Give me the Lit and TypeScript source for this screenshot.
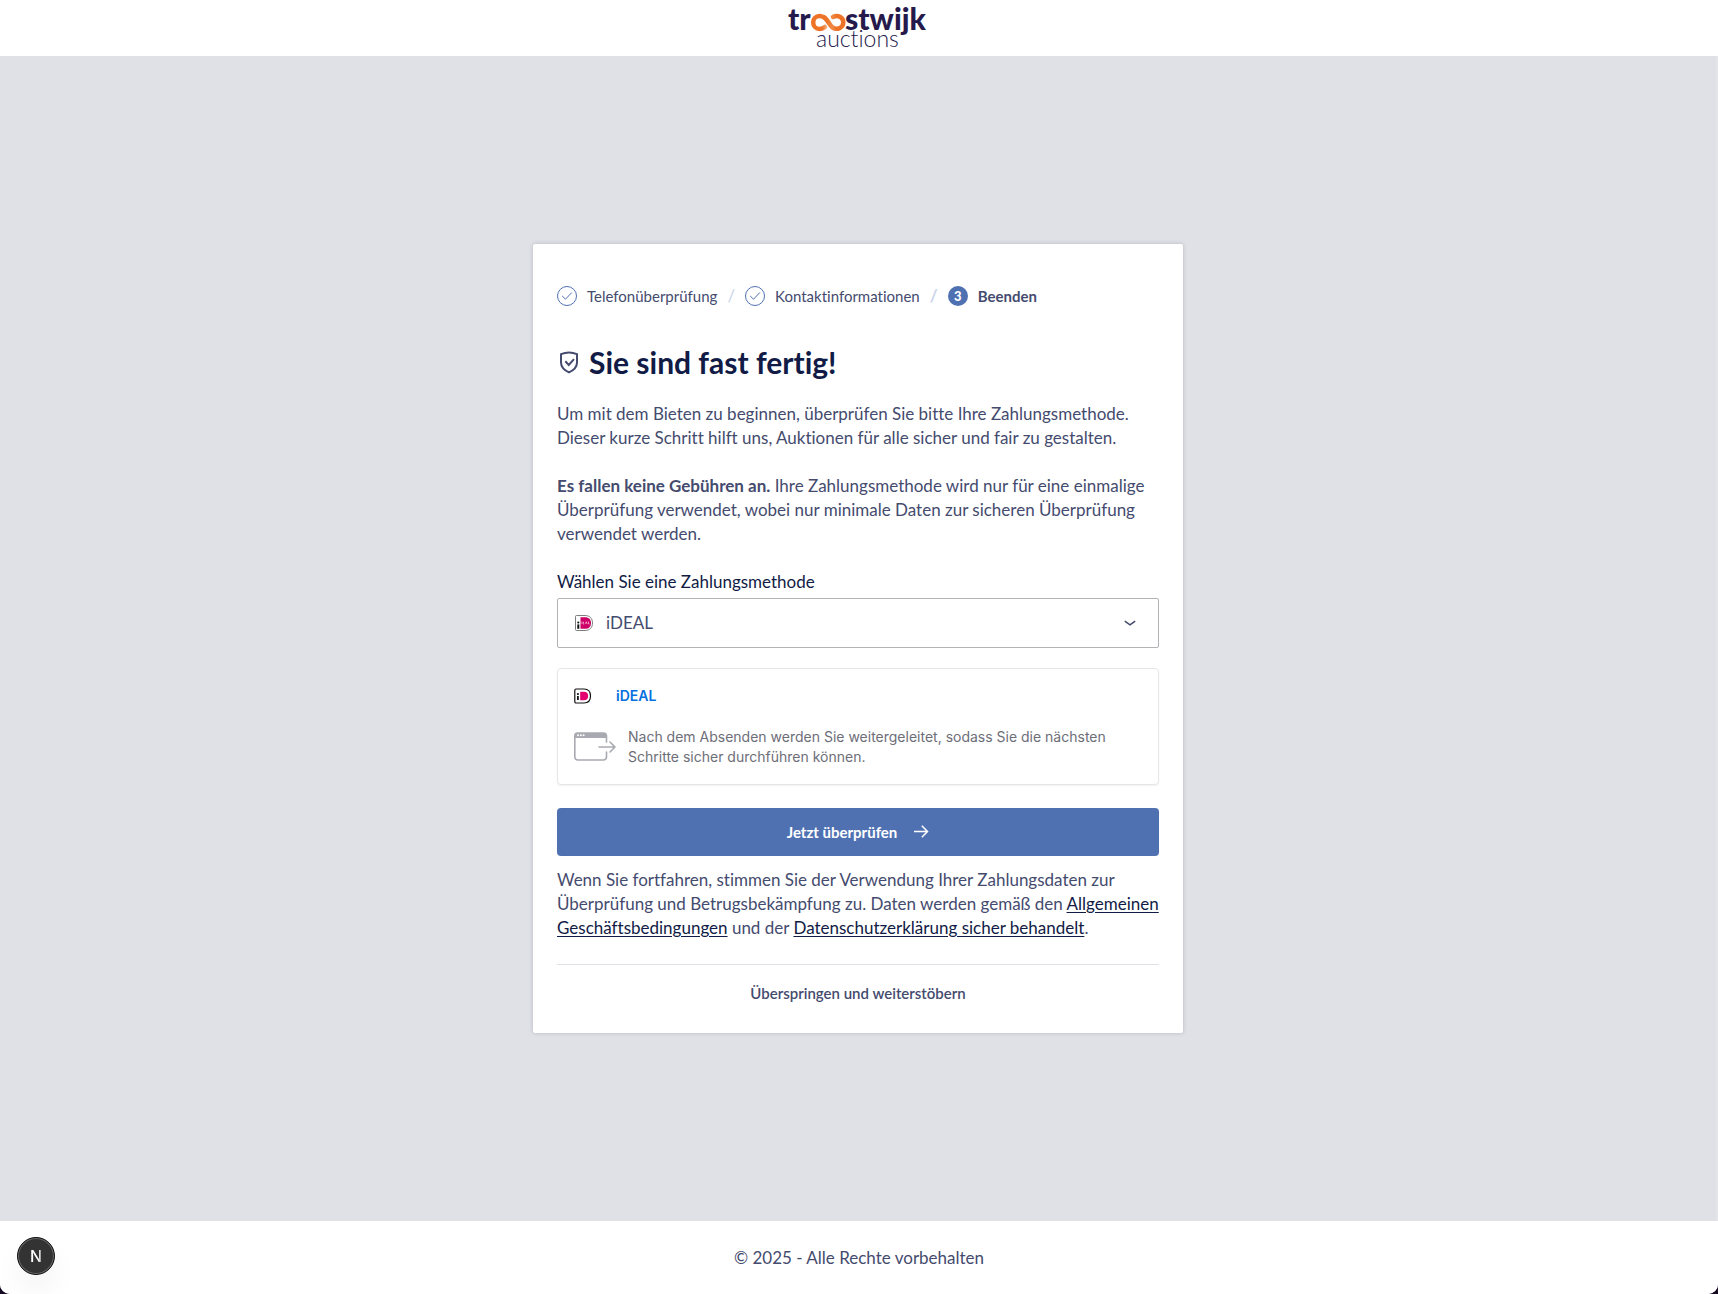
import { LitElement, html, css, nothing } from "lit";
import { customElement, property, state } from "lit/decorators.js";
import { classMap } from "lit/directives/class-map.js";

const base = css`
  *,
  *::before,
  *::after {
    box-sizing: border-box;
  }
  svg {
    display: block;
    flex: none;
  }
`;

@customElement("brand-logo")
class BrandLogo extends LitElement {
  static styles = [
    base,
    css`
      :host {
        display: block;
      }
      .heavy {
        font: 900 30px Lato, "Liberation Sans", sans-serif;
        fill: #261a4d;
      }
      .light {
        font: 300 23px Lato, "Liberation Sans", sans-serif;
        fill: #261a4d;
      }
      .heavy,
      .light {
        font-variant-ligatures: no-common-ligatures;
      }
      .loop {
        fill: none;
        stroke-width: 4.5;
        stroke-linecap: round;
      }
    `,
  ];

  render() {
    return html`
      <svg width="142" height="56" viewBox="0 0 142 56" role="img" aria-label="troostwijk auctions">
        <defs>
          <linearGradient id="left" gradientUnits="userSpaceOnUse" x1="24" y1="0" x2="41" y2="0">
            <stop offset="0.6" stop-color="#ee7326" />
            <stop offset="1" stop-color="#f9c9a8" />
          </linearGradient>
          <linearGradient id="right" gradientUnits="userSpaceOnUse" x1="39" y1="0" x2="57" y2="0">
            <stop offset="0" stop-color="#ee7326" />
            <stop offset="0.3" stop-color="#f08a49" />
            <stop offset="0.5" stop-color="#ee7326" />
          </linearGradient>
        </defs>
        <text class="heavy" x="0" y="30">tr</text>
        <path
          class="loop"
          stroke="url(#left)"
          d="M37 27 C35.500 28.300 33.700 28.900 31.600 28.900 C27.900 28.900 25.200 26 25.200 22.400 C25.200 18.800 27.900 16 31.600 16 C35.500 16 37.700 18.300 40 21.400"
        />
        <path
          class="loop"
          stroke="url(#right)"
          d="M36.500 17.500 C39.700 19.800 41.500 25 44.500 27.500 C49.500 30.800 55.300 27 55.300 22.400 C55.300 17.500 49.800 14.300 45 17"
        />
        <text class="heavy" x="57" y="30">stwijk</text>
        <text class="light" x="28" y="47">auctions</text>
      </svg>
    `;
  }
}

@customElement("ideal-mark")
class IdealMark extends LitElement {
  @property({ type: Boolean }) lettered = false;

  static styles = [
    base,
    css`
      :host {
        display: block;
        flex: none;
      }
    `,
  ];

  render() {
    return this.lettered
      ? html`
          <svg width="18" height="16" viewBox="0 0 18 16" aria-hidden="true">
            <path d="M1.500 0.500 H10 C14.800 0.500 17.500 3.500 17.500 8 C17.500 12.500 14.800 15.500 10 15.500 H1.500 A1 1 0 0 1 0.500 14.500 V1.500 A1 1 0 0 1 1.500 0.500 Z" fill="#fff" stroke="#7d7d7d" />
            <path d="M5.500 2.200 H10 C14 2.200 16 4.500 16 8 C16 11.500 14 13.800 10 13.800 H5.500 Z" fill="#cc0066" />
            <circle cx="3.300" cy="7.500" r="1.100" fill="#111" />
            <rect x="2.300" y="9.400" width="2" height="4.400" fill="#111" />
            <path d="M6 6.500 V9 M8 6.500 V9 H9.200 M8 7.700 H9 M10.500 9 L11.300 6.700 L12.100 9 M13.500 6.500 V9 H14.500" fill="none" stroke="#f5b8d6" stroke-width="0.8" />
          </svg>
        `
      : html`
          <svg width="18" height="16" viewBox="0 0 18 16" aria-hidden="true">
            <path d="M2 1 H10 C14.200 1 16.500 3.600 16.500 8 C16.500 12.400 14.200 15 10 15 H2 A1.200 1.200 0 0 1 0.800 13.800 V2.200 A1.200 1.200 0 0 1 2 1 Z" fill="#fff" stroke="#111" stroke-width="1.200" />
            <path d="M6.200 3.800 H10 C12.900 3.800 14.200 5.400 14.200 8 C14.200 10.600 12.900 12.200 10 12.200 H6.200 Z" fill="#e3006f" />
            <circle cx="3.900" cy="6" r="1.100" fill="#111" />
            <rect x="3" y="8" width="1.800" height="4" fill="#111" />
          </svg>
        `;
  }
}

interface Step {
  label: string;
  done: boolean;
}

@customElement("progress-steps")
class ProgressSteps extends LitElement {
  @property({ attribute: false }) steps: Step[] = [];

  static styles = [
    base,
    css`
      .steps {
        display: flex;
        align-items: center;
        gap: 10px;
        margin: 0;
        padding: 0;
        list-style: none;
        font-size: 15px;
        line-height: 20px;
        color: #444b6e;
      }
      .step {
        display: flex;
        align-items: center;
        gap: 10px;
      }
      .step + .step::before {
        content: "/";
        font-size: 17px;
        color: #c9d4ea;
      }
      .current {
        font-weight: 700;
      }
      .number {
        display: grid;
        place-items: center;
        width: 20px;
        height: 20px;
        border-radius: 50%;
        background: #4f71b2;
        color: #fff;
        font-size: 13px;
        font-weight: 900;
      }
    `,
  ];

  render() {
    return html`
      <ol class="steps">
        ${this.steps.map(
          (step, i) => html`
            <li class=${classMap({ step: true, current: !step.done })} aria-current=${step.done ? nothing : "step"}>
              ${step.done
                ? html`
                    <svg width="20" height="20" viewBox="0 0 20 20" fill="none" stroke="#4f71b2" aria-hidden="true">
                      <circle cx="10" cy="10" r="9.500" />
                      <path d="M5.200 10 L8.500 13.200 L14.800 6.500" />
                    </svg>
                  `
                : html`<span class="number">${i + 1}</span>`}
              <span>${step.label}</span>
            </li>
          `
        )}
      </ol>
    `;
  }
}

@customElement("app-root")
class AppRoot extends LitElement {
  @state() private method = "iDEAL";

  private steps: Step[] = [
    { label: "Telefonüberprüfung", done: true },
    { label: "Kontaktinformationen", done: true },
    { label: "Beenden", done: false },
  ];

  static styles = [
    base,
    css`
      :host {
        display: block;
        background: #160a22;
        font-family: Lato, "Open Sans", sans-serif;
        font-size: 17px;
        font-variant-ligatures: no-common-ligatures;
        line-height: 24px;
        color: #444b6e;
      }
      .page {
        display: flex;
        flex-direction: column;
        min-height: 100vh;
        overflow: hidden;
        border-radius: 0 0 10px 10px;
        background: #e0e1e6;
      }
      .header {
        display: flex;
        justify-content: center;
        background: #fff;
      }
      .main {
        flex: 1;
        display: flex;
        align-items: center;
        justify-content: center;
        padding: 24px;
        border-right: 2px solid #e4e5e9;
      }
      .footer {
        display: flex;
        align-items: center;
        justify-content: center;
        min-height: 73px;
        padding: 24px;
        background: #fff;
      }
      .card {
        width: 100%;
        max-width: 650px;
        padding: 42px 24px 28px;
        border-radius: 2px;
        background: #fff;
        box-shadow: 0 0 4px rgba(20, 24, 60, 0.2);
      }
      .title {
        display: flex;
        align-items: center;
        gap: 8px;
        margin: 36px 0 20px;
        font-size: 30px;
        line-height: 40px;
        font-weight: 700;
        color: #111b45;
      }
      .text {
        margin: 0 0 24px;
      }
      .label {
        display: block;
        margin-bottom: 4px;
        color: #111b45;
      }
      .field {
        display: grid;
        grid-template-columns: 1fr;
        align-items: center;
        height: 50px;
        margin-bottom: 20px;
        border: 1px solid #b3b3b7;
        border-radius: 2px;
      }
      .field > * {
        grid-area: 1 / 1;
      }
      .mark,
      .caret {
        pointer-events: none;
        z-index: 1;
      }
      .mark {
        justify-self: start;
        margin-left: 17px;
      }
      .caret {
        justify-self: end;
        margin-right: 20px;
      }
      .select {
        appearance: none;
        width: 100%;
        height: 100%;
        padding: 0 48px;
        border: 0;
        background: transparent;
        font: inherit;
        color: inherit;
      }
      .panel {
        margin-bottom: 23px;
        padding: 17px 16px;
        border: 1px solid #e6e6e8;
        border-radius: 4px;
        background: #fff;
        box-shadow: 0 1px 2px rgba(0, 0, 0, 0.06);
        font-family: Inter, "Liberation Sans", sans-serif;
        font-size: 14px;
        line-height: 20px;
        color: #6d6e78;
      }
      .method {
        display: flex;
        align-items: center;
        gap: 24px;
        margin-bottom: 21px;
        font-weight: 600;
        color: #0570de;
      }
      .redirect {
        display: flex;
        align-items: center;
        gap: 12px;
      }
      .redirect p {
        margin: 0;
      }
      .submit {
        display: flex;
        align-items: center;
        justify-content: center;
        gap: 16px;
        width: 100%;
        height: 48px;
        margin-bottom: 12px;
        border: 0;
        border-radius: 4px;
        background: #4f71b2;
        font: inherit;
        font-size: 15px;
        font-weight: 700;
        color: #fff;
      }
      .legal {
        margin: 0;
        white-space: nowrap;
      }
      .link {
        color: #111b45;
        text-underline-offset: 2px;
      }
      .rule {
        height: 1px;
        margin: 24px 0 16px;
        border: 0;
        background: #e0e1e6;
      }
      .skip {
        display: block;
        margin: 0 auto;
        padding: 0;
        border: 0;
        background: none;
        font: inherit;
        font-size: 15px;
        font-weight: 600;
        color: inherit;
      }
      .dev {
        position: fixed;
        left: 17px;
        bottom: 19px;
        display: grid;
        place-items: center;
        width: 38px;
        height: 38px;
        padding: 0;
        border: 1px solid #111;
        border-radius: 50%;
        background: #333;
        box-shadow: inset 0 0 0 1px #6a6a6a, 0 16px 32px -8px rgba(0, 0, 0, 0.14);
      }
      .glyph {
        font: 500 16px Inter, sans-serif;
      }
    `,
  ];

  render() {
    return html`
      <div class="page">
        <header class="header"><brand-logo></brand-logo></header>
        <main class="main">
          <section class="card">
            <progress-steps .steps=${this.steps}></progress-steps>
            <h1 class="title">
              <svg width="24" height="24" viewBox="0 0 24 24" fill="none" stroke="#444b6e" stroke-width="2" aria-hidden="true">
                <path d="M4 4.200 Q12 0.800 20 4.200 V12.500 C20 17.500 16.500 20.300 12 22.400 C7.500 20.300 4 17.500 4 12.500 Z" />
                <path d="M8.300 11.300 L11.800 15 L17 9.200" />
              </svg>
              Sie sind fast fertig!
            </h1>
            <p class="text">
              Um mit dem Bieten zu beginnen, überprüfen Sie bitte Ihre Zahlungsmethode.<br />Dieser kurze Schritt hilft
              uns, Auktionen für alle sicher und fair zu gestalten.
            </p>
            <p class="text">
              <strong>Es fallen keine Gebühren an.</strong> Ihre Zahlungsmethode wird nur für eine einmalige Überprüfung
              verwendet, wobei nur minimale Daten zur sicheren Überprüfung verwendet werden.
            </p>
            <form @submit=${(e: Event) => e.preventDefault()}>
              <label class="label" for="method">Wählen Sie eine Zahlungsmethode</label>
              <div class="field">
                <ideal-mark class="mark" lettered></ideal-mark>
                <select
                  class="select"
                  id="method"
                  @change=${(e: Event) => (this.method = (e.target as HTMLSelectElement).value)}
                >
                  <option>iDEAL</option>
                </select>
                <svg class="caret" width="16" height="16" viewBox="0 0 16 16" fill="none" stroke="#444b6e" stroke-width="1.600" aria-hidden="true">
                  <path d="M2.800 6.200 L8 9.800 L13.200 6.200" />
                </svg>
              </div>
              <div class="panel">
                <div class="method">
                  <ideal-mark></ideal-mark>
                  <span>${this.method}</span>
                </div>
                <div class="redirect">
                  <svg width="42" height="30" viewBox="0 0 42 30" fill="none" stroke="#a9aab1" stroke-width="1.600" stroke-linecap="round" stroke-linejoin="round" aria-hidden="true">
                    <path d="M32.500 10 V4 A3 3 0 0 0 29.500 1 H3.500 A3 3 0 0 0 0.800 4 V25 A3 3 0 0 0 3.800 28 H29.500 A3 3 0 0 0 32.500 25 V20" />
                    <path d="M1 5.500 V3.500 A2.500 2.500 0 0 1 3.500 1 H29.500 A2.500 2.500 0 0 1 32.300 3.500 V5.500 Z" fill="#a9aab1" stroke="none" />
                    <path d="M1 5.500 H32" stroke-width="1" />
                    <path d="M25 15 H41 M36 10 L41 15 L36 20" />
                    <g fill="#fff" stroke="none">
                      <circle cx="4" cy="3.300" r="1" />
                      <circle cx="6.800" cy="3.300" r="1" />
                      <circle cx="9.600" cy="3.300" r="1" />
                    </g>
                  </svg>
                  <p>
                    Nach dem Absenden werden Sie weitergeleitet, sodass Sie die nächsten<br />Schritte sicher
                    durchführen können.
                  </p>
                </div>
              </div>
              <button class="submit" type="submit">
                Jetzt überprüfen
                <svg width="16" height="16" viewBox="0 0 16 16" fill="none" stroke="#fff" stroke-width="1.500" aria-hidden="true">
                  <path d="M1 7.500 H14.500 M8.800 1.800 L14.500 7.500 L8.800 13.200" />
                </svg>
              </button>
            </form>
            <p class="legal">
              Wenn Sie fortfahren, stimmen Sie der Verwendung Ihrer Zahlungsdaten zur<br />Überprüfung und
              Betrugsbekämpfung zu. Daten werden gemäß den <a class="link" href="#terms">Allgemeinen<br />Geschäftsbedingungen</a>
              und der <a class="link" href="#privacy">Datenschutzerklärung sicher behandelt</a>.
            </p>
            <hr class="rule" />
            <button class="skip" type="button">Überspringen und weiterstöbern</button>
          </section>
        </main>
        <footer class="footer">© 2025 - Alle Rechte vorbehalten</footer>
      </div>
      <button class="dev" type="button" aria-label="Entwicklerwerkzeuge">
        <svg width="20" height="20" viewBox="0 0 20 20" aria-hidden="true">
          <defs>
            <linearGradient id="fade" x1="0" y1="0" x2="1" y2="0">
              <stop offset="0.700" stop-color="#fff" />
              <stop offset="1" stop-color="#8a8a8a" />
            </linearGradient>
          </defs>
          <text class="glyph" x="10" y="16" text-anchor="middle" fill="url(#fade)">N</text>
        </svg>
      </button>
    `;
  }
}
